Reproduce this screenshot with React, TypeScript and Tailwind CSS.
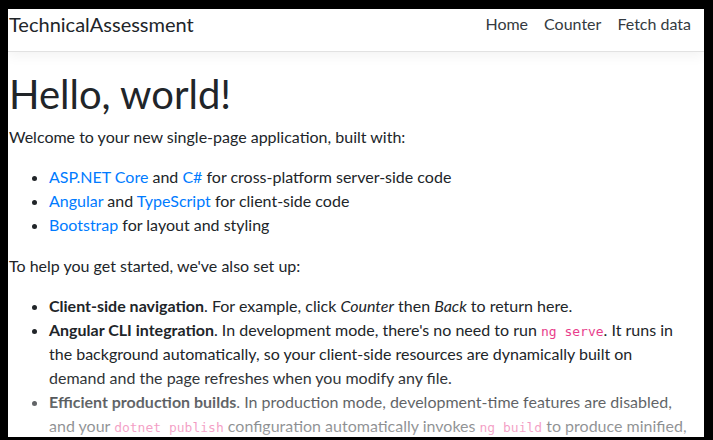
const Code = ({ children }: { children: React.ReactNode }) => (
  <code className="text-[13px] leading-[0] text-[#e83e8c] font-['DejaVu_Sans_Mono',monospace]">{children}</code>
);

const Link = ({ children }: { children: React.ReactNode }) => (
  <a href="#" className="text-[#007bff]">{children}</a>
);

export default function App() {
  return (
    <div className="w-[713px] h-[440px] bg-black pt-[9px] pl-[8px] pr-[9px] pb-[3px] font-['Lato',sans-serif] text-[#212529]">
      <div className="relative w-[696px] h-[428px] bg-white overflow-hidden">
        {/* Navbar */}
        <header className="flex items-start justify-between h-[43px] border-b border-[#e2e2e2] shadow-[0_4px_12px_rgba(0,0,0,0.05)] bg-white">
          <span className="pl-[1px] text-[20px] leading-[30px] text-[#212529]">TechnicalAssessment</span>
          <nav className="flex pr-[5px] text-[16px] leading-[30px] text-[#343a40]">
            <a href="#" className="px-2">Home</a>
            <a href="#" className="px-2">Counter</a>
            <a href="#" className="px-2">Fetch data</a>
          </nav>
        </header>

        {/* Main content */}
        <main className="pl-[1px] pt-[18px] text-[16px] leading-[24px]">
          <h1 className="text-[40px] leading-[48px] mb-[7px]">Hello, world!</h1>
          <p className="mb-4">Welcome to your new single-page application, built with:</p>
          <ul className="list-disc pl-[40px] mb-[17px]">
            <li><Link>ASP.NET Core</Link> and <Link>C#</Link> for cross-platform server-side code</li>
            <li><Link>Angular</Link> and <Link>TypeScript</Link> for client-side code</li>
            <li><Link>Bootstrap</Link> for layout and styling</li>
          </ul>
          <p className="mb-4">To help you get started, we've also set up:</p>
          <ul className="list-disc pl-[40px] whitespace-nowrap">
            <li>
              <strong>Client-side navigation</strong>. For example, click <em>Counter</em> then <em>Back</em> to return here.
            </li>
            <li>
              <strong>Angular CLI integration</strong>. In development mode, there's no need to run <Code>ng serve</Code>. It runs in
              <br />
              the background automatically, so your client-side resources are dynamically built on
              <br />
              demand and the page refreshes when you modify any file.
            </li>
            <li>
              <strong>Efficient production builds</strong>. In production mode, development-time features are disabled,
              <br />
              and your <Code>dotnet publish</Code> configuration automatically invokes <Code>ng build</Code> to produce minified,
              <br />
              ahead-of-time compiled JavaScript files.
            </li>
          </ul>
        </main>

        {/* Bottom fade */}
        <div className="absolute left-0 right-0 bottom-0 h-[65px] bg-gradient-to-b from-[rgba(255,255,255,0)] to-[rgba(255,255,255,0.6)] pointer-events-none" />
      </div>
    </div>
  );
}
